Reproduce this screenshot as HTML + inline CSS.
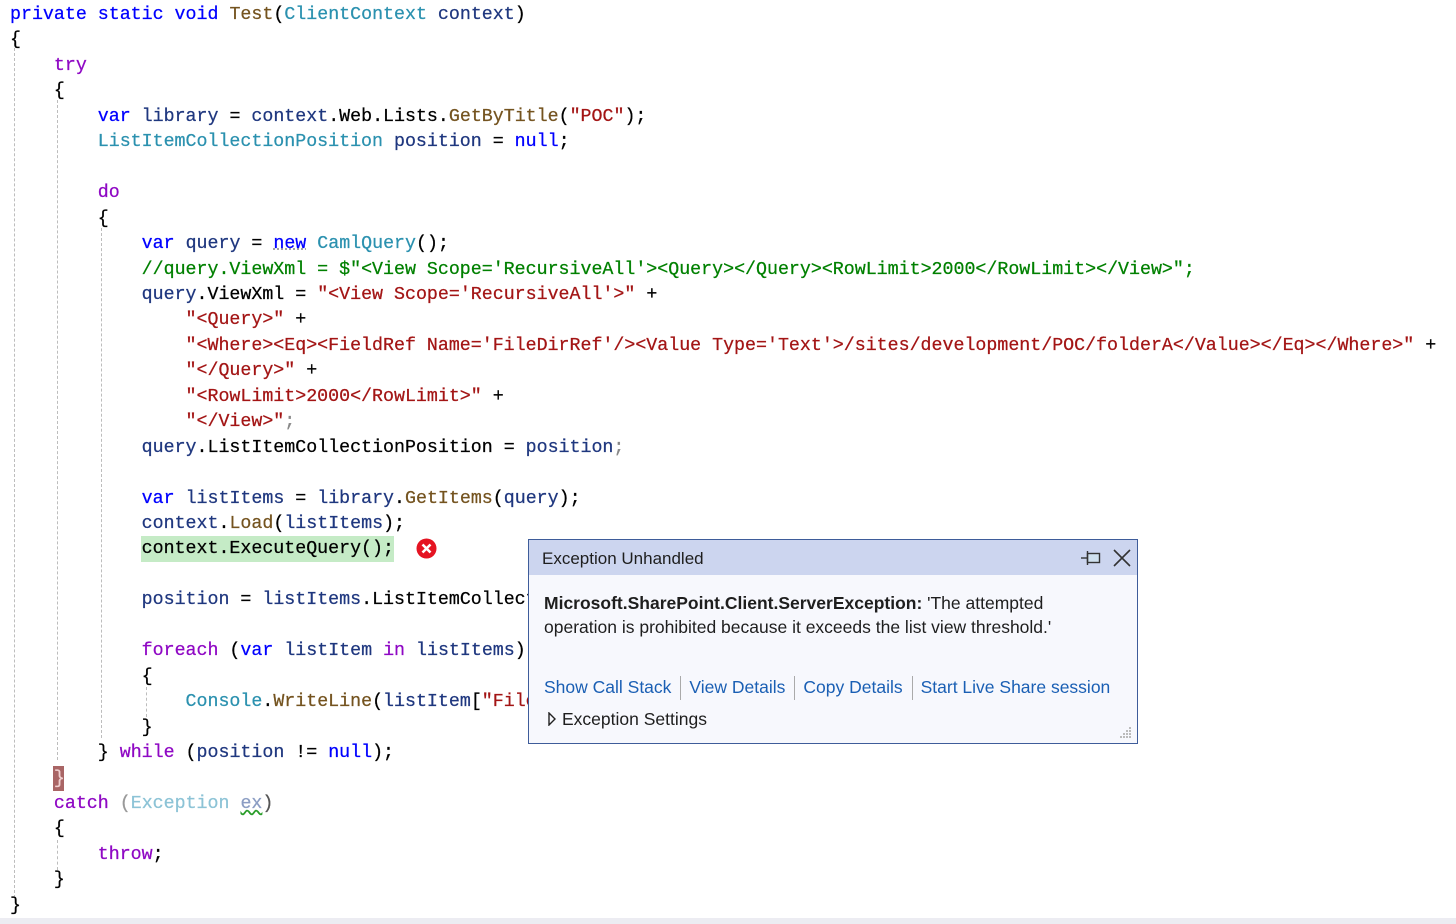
<!DOCTYPE html>
<html><head><meta charset="utf-8"><style>
html,body{margin:0;padding:0;background:#fff;width:1456px;height:924px;overflow:hidden;position:relative}
.code{position:absolute;left:10px;top:3px;font-family:"Liberation Mono",monospace;font-size:18.3px;white-space:pre;color:#000;-webkit-text-stroke:0.25px}
.l{position:absolute;left:0;height:25.45px;line-height:25.45px}
.k{color:#0000ff}.c{color:#8f08c4}.t{color:#2b91af}.m{color:#74531f}.s{color:#a31515}.i{color:#1f377f}.g{color:#008000}
.guide{position:absolute;width:0;border-left:1px dashed #bdbdbd}
.pop{position:absolute;left:528px;top:539px;width:608px;height:203px;border:1px solid #3e5c9a;background:#f7f8fd;font-family:"Liberation Sans",sans-serif;color:#1e1e1e}
.hdr{height:35px;background:#ccd5ef;font-size:17px;line-height:37px;padding-left:13px}
.a{color:#1a5fb4}
.sep{display:inline-block;width:1px;height:24px;background:#aaa;vertical-align:middle;margin:0 8px 0 9px}
</style></head><body>
<div class="guide" style="left:14px;top:38px;height:860px"></div>
<div class="guide" style="left:57px;top:100px;height:660px"></div>
<div class="guide" style="left:57px;top:840px;height:30px"></div>
<div class="guide" style="left:101px;top:228px;height:510px"></div>
<div class="guide" style="left:146px;top:687px;height:30px"></div>
<div style="position:absolute;left:141px;top:536px;width:253px;height:26px;background:#c5ebc6"></div>
<div style="position:absolute;left:53px;top:766px;width:11px;height:25px;background:#a96565"></div>
<svg style="position:absolute;left:416px;top:538px" width="21" height="21"><circle cx="10.5" cy="10.5" r="10" fill="#e51422"/><path d="M6.5 6.5L14.5 14.5M14.5 6.5L6.5 14.5" stroke="#fff" stroke-width="2.6"/></svg>
<div class="code">
<div class="l" style="top:0"><span class="k">private static void</span> <span class="m">Test</span>(<span class="t">ClientContext</span> <span class="i">context</span>)</div>
<div class="l" style="top:25.45px">{</div>
<div class="l" style="top:50.9px">    <span class="c">try</span></div>
<div class="l" style="top:76.35px">    {</div>
<div class="l" style="top:101.8px">        <span class="k">var</span> <span class="i">library</span> = <span class="i">context</span>.Web.Lists.<span class="m">GetByTitle</span>(<span class="s">"POC"</span>);</div>
<div class="l" style="top:127.25px">        <span class="t">ListItemCollectionPosition</span> <span class="i">position</span> = <span class="k">null</span>;</div>
<div class="l" style="top:178.15px">        <span class="c">do</span></div>
<div class="l" style="top:203.6px">        {</div>
<div class="l" style="top:229.05px">            <span class="k">var</span> <span class="i">query</span> = <span class="k" style="text-decoration:underline dotted #999">new</span> <span class="t">CamlQuery</span>();</div>
<div class="l" style="top:254.5px">            <span class="g">//query.ViewXml = $"&lt;View Scope='RecursiveAll'&gt;&lt;Query&gt;&lt;/Query&gt;&lt;RowLimit&gt;2000&lt;/RowLimit&gt;&lt;/View&gt;";</span></div>
<div class="l" style="top:279.95px">            <span class="i">query</span>.ViewXml = <span class="s">"&lt;View Scope='RecursiveAll'&gt;"</span> +</div>
<div class="l" style="top:305.4px">                <span class="s">"&lt;Query&gt;"</span> +</div>
<div class="l" style="top:330.85px">                <span class="s">"&lt;Where&gt;&lt;Eq&gt;&lt;FieldRef Name='FileDirRef'/&gt;&lt;Value Type='Text'&gt;/sites/development/POC/folderA&lt;/Value&gt;&lt;/Eq&gt;&lt;/Where&gt;"</span> +</div>
<div class="l" style="top:356.3px">                <span class="s">"&lt;/Query&gt;"</span> +</div>
<div class="l" style="top:381.75px">                <span class="s">"&lt;RowLimit&gt;2000&lt;/RowLimit&gt;"</span> +</div>
<div class="l" style="top:407.2px">                <span class="s">"&lt;/View&gt;"</span><span style="color:#888">;</span></div>
<div class="l" style="top:432.65px">            <span class="i">query</span>.ListItemCollectionPosition = <span class="i">position</span><span style="color:#888">;</span></div>
<div class="l" style="top:483.55px">            <span class="k">var</span> <span class="i">listItems</span> = <span class="i">library</span>.<span class="m">GetItems</span>(<span class="i">query</span>);</div>
<div class="l" style="top:509px">            <span class="i">context</span>.<span class="m">Load</span>(<span class="i">listItems</span>);</div>
<div class="l" style="top:534.45px">            context.ExecuteQuery();</div>
<div class="l" style="top:585.35px">            <span class="i">position</span> = <span class="i">listItems</span>.ListItemCollectionPosition;</div>
<div class="l" style="top:636.25px">            <span class="c">foreach</span> (<span class="k">var</span> <span class="i">listItem</span> <span class="c">in</span> <span class="i">listItems</span>)</div>
<div class="l" style="top:661.7px">            {</div>
<div class="l" style="top:687.15px">                <span class="t">Console</span>.<span class="m">WriteLine</span>(<span class="i">listItem</span>[<span class="s">"FileRef"</span>]);</div>
<div class="l" style="top:712.6px">            }</div>
<div class="l" style="top:738.05px">        } <span class="c">while</span> (<span class="i">position</span> != <span class="k">null</span>);</div>
<div class="l" style="top:763.5px">    <span style="color:#f0d0d0">}</span></div>
<div class="l" style="top:788.95px">    <span class="c">catch</span> <span style="color:#999">(</span><span style="color:#8cc3d6">Exception</span> <span style="color:#8b9dc3;text-decoration:underline wavy #2a9d2a">ex</span><span style="color:#555">)</span></div>
<div class="l" style="top:814.4px">    {</div>
<div class="l" style="top:839.85px">        <span class="c">throw</span>;</div>
<div class="l" style="top:865.3px">    }</div>
<div class="l" style="top:890.75px">}</div>
</div>
<div style="position:absolute;left:0;top:918px;width:1456px;height:6px;background:#ececf2"></div>
<div class="pop">
<div class="hdr">Exception Unhandled</div>
<svg style="position:absolute;left:551px;top:9px" width="22" height="18"><path d="M1 9H7" stroke="#333" stroke-width="1.4"/><rect x="7.5" y="4.5" width="12" height="9" fill="#cfe0ee" stroke="#333" stroke-width="1.4"/><path d="M7.5 2V16" stroke="#333" stroke-width="1.4"/></svg>
<svg style="position:absolute;left:583px;top:8px" width="20" height="20"><path d="M2 2L18 18M18 2L2 18" stroke="#333" stroke-width="1.6"/></svg>
<div style="position:absolute;left:15px;top:51px;font-size:17.5px;line-height:24px"><b>Microsoft.SharePoint.Client.ServerException:</b> 'The attempted<br>operation is prohibited because it exceeds the list view threshold.'</div>
<div style="position:absolute;left:15px;top:134px;font-size:17.5px;line-height:26px;white-space:nowrap"><span class="a">Show Call Stack</span><span class="sep"></span><span class="a">View Details</span><span class="sep"></span><span class="a">Copy Details</span><span class="sep"></span><span class="a">Start Live Share session</span></div>
<svg style="position:absolute;left:18px;top:172px" width="10" height="14"><path d="M2 1L8 7L2 13Z" fill="none" stroke="#222" stroke-width="1.4"/></svg>
<div style="position:absolute;left:33px;top:167px;font-size:17.5px;line-height:24px">Exception Settings</div>
<svg style="position:absolute;left:590px;top:186px" width="14" height="14" fill="#bbb"><rect x="10" y="1" width="2" height="2"/><rect x="7" y="4" width="2" height="2"/><rect x="10" y="4" width="2" height="2"/><rect x="4" y="7" width="2" height="2"/><rect x="7" y="7" width="2" height="2"/><rect x="10" y="7" width="2" height="2"/><rect x="1" y="10" width="2" height="2"/><rect x="4" y="10" width="2" height="2"/><rect x="7" y="10" width="2" height="2"/><rect x="10" y="10" width="2" height="2"/></svg>
</div>
</body></html>
